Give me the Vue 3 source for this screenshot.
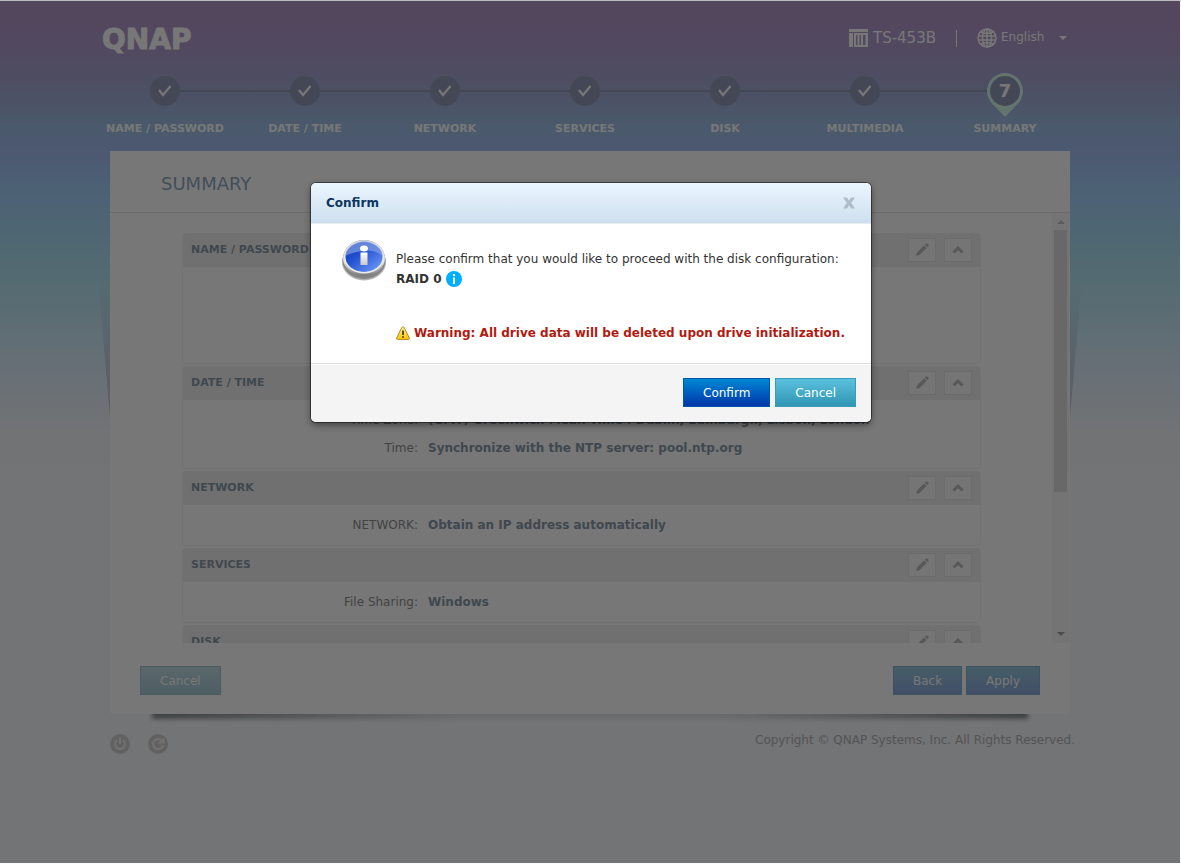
<template>
  <div class="wizard">
    <div class="shell">
      <header class="topbar">
        <div class="logo">QNAP</div>
        <div class="topbar-right">
          <span class="model">
            <svg width="20" height="18" viewBox="0 0 20 18">
              <path d="M0 0H19V3H0Z M0 4H4V18H0Z M5 4H19V18H5Z M7 6V16H8.500V6Z M10.500 6V16H12V6Z M14 6V16H16.500V6Z" fill="currentColor" fill-rule="evenodd" />
            </svg>
            TS-453B
          </span>
          <span class="divider"></span>
          <label class="language">
            <svg width="20" height="20" viewBox="0 0 20 20" fill="none" stroke="currentColor" stroke-width="1.500">
              <circle cx="10" cy="10" r="9" />
              <ellipse cx="10" cy="10" rx="4.500" ry="9" />
              <path d="M10 1V19 M1 8H19 M1 12H19 M4 4Q10 7 16 4 M4 16Q10 13 16 16" />
            </svg>
            <select v-model="language" aria-label="Language">
              <option>English</option>
            </select>
            <i class="caret"></i>
          </label>
        </div>
      </header>

      <ol class="steps">
        <li v-for="(step, index) in steps" :key="step" class="step">
          <div class="track">
            <span v-if="index < steps.length - 1" class="dot">
              <svg width="14" height="12" viewBox="0 0 14 12">
                <path d="M1 5L5 10L12.500 1" fill="none" stroke="currentColor" stroke-width="2.200" />
              </svg>
            </span>
            <span v-else class="pin">
              <svg width="36" height="44" viewBox="0 0 36 44">
                <path d="M18 44L6 31.500A18 18 0 1 1 30 31.500Z" fill="#d4f8ee" />
                <circle cx="18" cy="18" r="15" fill="#939bb8" />
              </svg>
              <b>{{ index + 1 }}</b>
            </span>
          </div>
          <span class="step-name">{{ step }}</span>
        </li>
      </ol>

      <main class="card">
        <h1>SUMMARY</h1>
        <div class="scroll-area">
          <div class="sections">
            <section v-for="section in sections" :key="section.title" class="section">
              <div class="section-head">
                <h2>{{ section.title }}</h2>
                <button class="tool" type="button" aria-label="Edit">
                  <svg width="14" height="14" viewBox="0 0 14 14" fill="currentColor">
                    <path d="M1 13L2 9.500L9 2.500L11.500 5L4.500 12Z M9.800 1.700L11 .6Q12 0 13 1T13.400 3L12.300 4.200Z" />
                  </svg>
                </button>
                <button class="tool" type="button" aria-label="Collapse">
                  <svg width="12" height="10" viewBox="0 0 12 10">
                    <path d="M1.500 7.500L6 3L10.500 7.500" fill="none" stroke="currentColor" stroke-width="3" />
                  </svg>
                </button>
              </div>
              <dl class="section-body" :class="{ tall: !section.rows.length }">
                <div v-for="row in section.rows" :key="row.label" class="row">
                  <dt>{{ row.label }}:</dt>
                  <dd>{{ row.value }}</dd>
                </div>
              </dl>
            </section>
          </div>
          <div class="scrollbar">
            <i class="arrow up"></i>
            <div class="thumb"></div>
            <i class="arrow down"></i>
          </div>
        </div>
        <div class="card-foot">
          <button class="btn pale" type="button">Cancel</button>
          <span class="spacer"></span>
          <button class="btn soft" type="button">Back</button>
          <button class="btn soft" type="button">Apply</button>
        </div>
      </main>

      <footer class="page-foot">
        <button class="round" type="button" aria-label="Power">
          <svg width="20" height="20" viewBox="0 0 20 20" fill="none" stroke="#f4f4f4" stroke-width="2">
            <path d="M7 6A5 5 0 1 0 13 6 M10 3V10" />
          </svg>
        </button>
        <button class="round" type="button" aria-label="Restart">
          <svg width="20" height="20" viewBox="0 0 20 20" fill="none" stroke="#f4f4f4" stroke-width="2">
            <path d="M14 7A5 5 0 1 0 15 11 M15.500 4V8.500H10.500" />
          </svg>
        </button>
        <span class="spacer"></span>
        <span>Copyright © QNAP Systems, Inc. All Rights Reserved.</span>
      </footer>
    </div>

    <div v-if="open" class="overlay">
      <div class="modal" role="dialog" aria-labelledby="modal-title">
        <div class="modal-head">
          <h3 id="modal-title">Confirm</h3>
          <button class="close" type="button" aria-label="Close" @click="open = false">
            <svg width="12" height="12" viewBox="0 0 12 12">
              <path d="M0 .5H4L6 3.800L8 .5H12L8.200 6L12 11.500H8L6 8.200L4 11.500H0L3.800 6Z" fill="currentColor" />
            </svg>
          </button>
        </div>
        <div class="modal-body">
          <svg class="info" width="44" height="42" viewBox="0 0 44 42">
            <defs>
              <linearGradient id="rim" x1="0" y1="0" x2="0" y2="1">
                <stop offset="0" stop-color="#a5a5a5" />
                <stop offset=".6" stop-color="#e6e6e6" />
                <stop offset="1" stop-color="#777777" />
              </linearGradient>
              <linearGradient id="disc" x1="0" y1="0" x2="1" y2="1">
                <stop offset="0" stop-color="#1137ac" />
                <stop offset=".4" stop-color="#2252d0" />
                <stop offset="1" stop-color="#78a0ff" />
              </linearGradient>
              <linearGradient id="bar" x1="0" y1="0" x2="0" y2="1">
                <stop offset="0" stop-color="#ffffff" />
                <stop offset="1" stop-color="#c9c9c9" />
              </linearGradient>
            </defs>
            <ellipse cx="22" cy="23" rx="22" ry="18.500" fill="#555555" opacity=".45" />
            <ellipse cx="22" cy="21.500" rx="21.500" ry="18.500" fill="#838383" />
            <ellipse cx="22" cy="19" rx="21" ry="18" fill="url(#rim)" />
            <ellipse cx="22" cy="18" rx="20" ry="16.500" fill="#ececec" />
            <ellipse cx="22" cy="18" rx="18.500" ry="15" fill="url(#disc)" />
            <path d="M3.500 17A18.500 15 0 0 1 40.500 17Q32 10 20 12T3.500 17Z" fill="#8aa4e6" opacity=".65" />
            <ellipse cx="22" cy="9.500" rx="4" ry="3" fill="#ffffff" />
            <path d="M18.500 13.500H25.500V26H18.500Z" fill="url(#bar)" />
          </svg>
          <div class="message">
            <p>Please confirm that you would like to proceed with the disk configuration:</p>
            <p class="raid">
              <strong>RAID 0</strong>
              <svg width="16" height="16" viewBox="0 0 16 16">
                <circle cx="8" cy="8" r="8" fill="#00aeff" />
                <path d="M7 3H9V5H7Z M7 6.500H9V13H7Z" fill="#ffffff" />
              </svg>
            </p>
            <p class="warning">
              <svg width="14" height="14" viewBox="0 0 14 14">
                <defs>
                  <linearGradient id="amber" x1="0" y1="0" x2="0" y2="1">
                    <stop offset="0" stop-color="#fff3a0" />
                    <stop offset="1" stop-color="#ffc400" />
                  </linearGradient>
                </defs>
                <path d="M7 .7Q7.800 .7 8.300 1.700L13.300 12Q13.700 13.400 12.500 13.400H1.500Q.3 13.400 .7 12L5.700 1.700Q6.200 .7 7 .7Z" fill="url(#amber)" stroke="#b58a1c" />
                <path d="M6.200 4.500H7.800V9H6.200Z M6.200 10.200H7.800V11.700H6.200Z" fill="#2b2b2b" />
              </svg>
              Warning: All drive data will be deleted upon drive initialization.
            </p>
          </div>
        </div>
        <div class="modal-foot">
          <button class="btn primary" type="button" @click="open = false">Confirm</button>
          <button class="btn light" type="button" @click="open = false">Cancel</button>
        </div>
      </div>
    </div>
  </div>
</template>

<script setup>
import { ref } from 'vue'

const open = ref(true)
const language = ref('English')

const steps = ['NAME / PASSWORD', 'DATE / TIME', 'NETWORK', 'SERVICES', 'DISK', 'MULTIMEDIA', 'SUMMARY']

const sections = [
  { title: 'NAME / PASSWORD', rows: [] },
  {
    title: 'DATE / TIME',
    rows: [
      { label: 'Time Zone', value: '(GMT) Greenwich Mean Time : Dublin, Edinburgh, Lisbon, London' },
      { label: 'Time', value: 'Synchronize with the NTP server: pool.ntp.org' }
    ]
  },
  { title: 'NETWORK', rows: [{ label: 'NETWORK', value: 'Obtain an IP address automatically' }] },
  { title: 'SERVICES', rows: [{ label: 'File Sharing', value: 'Windows' }] },
  { title: 'DISK', rows: [] }
]
</script>

<style>
body {
  margin: 0;
  background: #f4f4f4;
}
</style>

<style scoped>
* {
  box-sizing: border-box;
}

svg {
  flex: none;
}

.wizard {
  position: relative;
  min-height: 100vh;
  border: solid #fafafa;
  border-width: 1px 1px 1px 0;
  border-top-color: #bcbcbc;
  font: 12px/20px "DejaVu Sans", Verdana, sans-serif;
  color: #909090;
  background: linear-gradient(
    #b498c9 0,
    #b09acb 40px,
    #a7a5d0 75px,
    #a3b0da 100px,
    #a1bfe7 125px,
    #a3bcee 145px,
    #a5d0fa 190px,
    #a9ddf4 240px,
    #b6e5f4 280px,
    #ceebfa 335px,
    #dfeefc 370px,
    #f2f6fa 430px,
    #f6f8fc 480px
  );
}

.shell {
  position: relative;
  z-index: 0;
  max-width: 990px;
  margin: 0 auto;
  padding-right: 10px;
}

.topbar {
  display: flex;
  justify-content: space-between;
  align-items: center;
  height: 72px;
  padding: 2px 8px 0 7px;
  color: #fff;
}

.logo {
  padding-top: 4px;
  font-size: 28px;
  line-height: 28px;
  font-weight: bold;
  -webkit-text-stroke: 1px #fff;
}

.topbar-right,
.model,
.language {
  display: flex;
  align-items: center;
}

.model {
  gap: 4px;
  font-size: 15px;
}

.divider {
  width: 1px;
  height: 17px;
  margin: 0 20px;
  background: #fff;
}

.language select {
  appearance: none;
  margin: 0 14px 2px 4px;
  padding: 0;
  border: 0;
  background: none;
  color: inherit;
  font: inherit;
}

.caret {
  border: 4px solid transparent;
  border-top-color: #fff;
  border-bottom: 0;
}

.steps {
  display: grid;
  grid-template-columns: repeat(7, 1fr);
  height: 78px;
  margin: 0;
  padding: 0;
  list-style: none;
  color: #fff;
}

.track {
  display: flex;
  align-items: center;
  height: 36px;
}

.track::before,
.track::after {
  content: "";
  flex: 1;
  height: 2px;
  background: #939bb8;
}

.step:first-child .track::before,
.step:last-child .track::after {
  background: none;
}

.dot {
  display: flex;
  align-items: center;
  justify-content: center;
  width: 30px;
  height: 30px;
  border-radius: 50%;
  background: #939bb8;
}

.pin {
  position: relative;
  width: 36px;
  height: 36px;
}

.pin b {
  position: absolute;
  inset: 0;
  font-size: 18px;
  line-height: 36px;
  text-align: center;
}

.step-name {
  display: block;
  margin-top: 10px;
  font-size: 11px;
  font-weight: bold;
  text-align: center;
}

.card {
  position: relative;
  margin: 0 5px 0 15px;
  background: #fff;
}

/* folded side shadows */
.card::before {
  content: "";
  position: absolute;
  z-index: -1;
  top: 128px;
  left: -12px;
  right: -12px;
  height: 138px;
  background: linear-gradient(rgba(80, 90, 100, 0), rgba(80, 90, 100, .3));
  clip-path: polygon(0 0, 100% 0, calc(100% - 12px) 100%, 12px 100%);
}

/* lifted bottom corners */
.card::after {
  content: "";
  position: absolute;
  z-index: -1;
  top: calc(100% - 4px);
  left: 42px;
  right: 42px;
  height: 9px;
  background: linear-gradient(90deg, rgba(60, 70, 70, .6), rgba(60, 70, 70, .1) 35%, rgba(60, 70, 70, .1) 65%, rgba(60, 70, 70, .6));
  filter: blur(2px);
}

h1 {
  margin: 0;
  padding: 4px 51px 0;
  border-bottom: 1px solid #e6e6e6;
  color: #8fa8c4;
  font-size: 18px;
  font-weight: normal;
  line-height: 57px;
}

.scroll-area {
  display: flex;
  height: 430px;
  overflow: hidden;
}

.sections {
  flex: 1;
  padding: 20px 71px 0 72px;
}

.section {
  margin-bottom: 2px;
  border: 1px solid #f2f2f2;
  border-radius: 4px;
}

.section-head {
  display: flex;
  align-items: center;
  gap: 8px;
  height: 33px;
  padding: 0 8px 1px;
  background: #f0f0f0;
}

h2 {
  flex: 1;
  margin: 0;
  color: #8b99a8;
  font-size: 11px;
}

.tool {
  display: flex;
  align-items: center;
  justify-content: center;
  width: 28px;
  height: 24px;
  padding: 0;
  border: 1px solid #e6e6e6;
  background: #fbfbfb;
  color: #bcbcbc;
}

.section-body {
  margin: 0;
  padding: 6px 0;
}

.section-body.tall {
  height: 96px;
}

.row {
  display: flex;
  gap: 10px;
  line-height: 28px;
}

dt {
  width: 235px;
  text-align: right;
}

dd {
  margin: 0;
  color: #8b99a8;
  font-weight: bold;
}

.scrollbar {
  display: flex;
  flex-direction: column;
  align-items: center;
  width: 17px;
  margin-right: 1px;
  padding: 7px 0;
  background: #f8f8f8;
}

.thumb {
  width: 13px;
  height: 262px;
  margin: 6px 0 auto;
  background: #dedede;
}

.arrow {
  border: 4px solid transparent;
}

.arrow.up {
  border-top: 0;
  border-bottom-color: #c4c4c4;
}

.arrow.down {
  border-bottom: 0;
  border-top-color: #a4a4a4;
}

.card-foot {
  display: flex;
  gap: 4px;
  padding: 23px 30px 19px;
}

.spacer {
  flex: 1;
}

.btn {
  height: 29px;
  padding: 0 19px;
  border: 1px solid transparent;
  color: #fff;
  font: inherit;
}

.btn.pale {
  border-color: #a2c6d2;
  background: linear-gradient(#c0dce4, #a8cad6);
}

.btn.soft {
  border-color: #88b0cc;
  background: linear-gradient(#94c8dc, #90a8dc);
}

.btn.primary {
  border-color: #0056ac;
  background: linear-gradient(#0088d4, #0036a8);
}

.btn.light {
  border-color: #3a9bb8;
  background: linear-gradient(#5bc0de, #2f96b4);
}

.page-foot {
  display: flex;
  align-items: center;
  gap: 18px;
  margin-top: 12px;
  padding-left: 15px;
  color: #b4b4b4;
}

.round {
  width: 20px;
  height: 20px;
  margin: 8px 0 0;
  padding: 0;
  border: 0;
  border-radius: 50%;
  background: #d0d0d0;
}

.round svg {
  display: block;
}

.overlay {
  position: absolute;
  z-index: 1;
  inset: 0;
  display: flex;
  align-items: flex-start;
  justify-content: center;
  padding: 182px 0 0 2px;
  background: rgba(0, 0, 0, .533);
}

.modal {
  width: 560px;
  border-radius: 5px;
  background: #fff;
  box-shadow: 0 0 0 1px rgba(0, 0, 0, .45), 0 3px 7px rgba(0, 0, 0, .45);
  color: #333;
}

.modal-head {
  display: flex;
  align-items: center;
  justify-content: space-between;
  height: 41px;
  padding: 0 16px 0 15px;
  border-bottom: 1px solid #e6edf3;
  border-radius: 5px 5px 0 0;
  background: linear-gradient(#ebf6ff, #cddfef);
}

h3 {
  margin: 0;
  color: #0b365f;
  font-size: 12px;
}

.close {
  padding: 0;
  border: 0;
  background: none;
  color: #afbdc9;
}

.close svg {
  display: block;
}

.modal-body {
  display: flex;
  gap: 10px;
  height: 139px;
  padding: 15px 22px 15px 31px;
}

.message {
  padding-top: 10px;
}

p {
  margin: 0;
}

.raid,
.warning {
  display: flex;
  align-items: center;
  gap: 5px;
}

.warning {
  gap: 4px;
  margin-top: 34px;
  color: #b01a10;
  font-weight: bold;
  white-space: nowrap;
}

.modal-foot {
  display: flex;
  justify-content: flex-end;
  gap: 5px;
  padding: 14px 15px 15px;
  border-top: 1px solid #ddd;
  border-radius: 0 0 5px 5px;
  background: #f4f4f4;
  box-shadow: inset 0 1px #fff;
}
</style>
